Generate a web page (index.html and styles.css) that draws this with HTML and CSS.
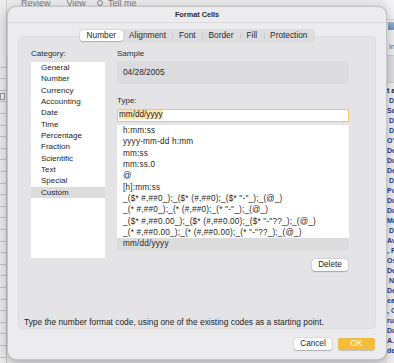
FILE: index.html
```html
<!DOCTYPE html>
<html>
<head>
<meta charset="utf-8">
<title>Format Cells</title>
<link rel="stylesheet" href="styles.css">
</head>
<body>
<div class="screen">
  <div class="strip-left">
    <div class="sl-top"></div>
    <div class="sl-grid">
      <div class="sl-drop"></div>
    </div>
  </div>
  <div class="backdrop">
    <div class="menubar">
      <span>Review</span>
      <span>View</span>
      <span class="tell"><span class="search"></span>Tell me</span>
    </div>
  </div>
  <div class="strip-right">
    <div class="sr-top"></div>
    <div class="sr-icon"></div>
    <div class="sr-in">In</div>
    <div class="sr-band"></div>
    <div class="sr-rows">
      <div class="hdr">t a</div>
      <div>&nbsp;D</div>
      <div>Sa</div>
      <div>&nbsp;D</div>
      <div>&nbsp;D</div>
      <div>O'C</div>
      <div>De</div>
      <div>Du</div>
      <div>De</div>
      <div>&nbsp;D</div>
      <div>Po</div>
      <div>Du</div>
      <div>Du</div>
      <div>Ma</div>
      <div>&nbsp;D</div>
      <div>Av</div>
      <div>, F</div>
      <div>Os</div>
      <div>De</div>
      <div>&nbsp;N</div>
      <div>De</div>
      <div>ea</div>
      <div>, C</div>
      <div>ru</div>
      <div>Du</div>
      <div>A.</div>
      <div>de</div>
    </div>
  </div>

  <div class="dialog">
    <div class="titlebar">Format Cells</div>
    <div class="dialog-body">
      <div class="tabs">
        <div class="tab active">Number</div>
        <div class="tab">Alignment</div>
        <div class="tab">Font</div>
        <div class="tab">Border</div>
        <div class="tab">Fill</div>
        <div class="tab">Protection</div>
      </div>
      <div class="panel">
        <div class="columns">
          <div class="cat-col">
            <div class="label">Category:</div>
            <div class="list cat-list">
              <div class="row">General</div>
              <div class="row">Number</div>
              <div class="row">Currency</div>
              <div class="row">Accounting</div>
              <div class="row">Date</div>
              <div class="row">Time</div>
              <div class="row">Percentage</div>
              <div class="row">Fraction</div>
              <div class="row">Scientific</div>
              <div class="row">Text</div>
              <div class="row">Special</div>
              <div class="row sel">Custom</div>
            </div>
          </div>
          <div class="main-col">
            <div class="label">Sample</div>
            <div class="sample">04/28/2005</div>
            <div class="label type-label">Type:</div>
            <div class="input"><span class="seltext">mm/dd/yyyy</span></div>
            <div class="list type-list">
              <div class="row">h:mm:ss</div>
              <div class="row">yyyy-mm-dd h:mm</div>
              <div class="row">mm:ss</div>
              <div class="row">mm:ss.0</div>
              <div class="row">@</div>
              <div class="row">[h]:mm:ss</div>
              <div class="row">_($* #,##0_);_($* (#,##0);_($* "-"_);_(@_)</div>
              <div class="row">_(* #,##0_);_(* (#,##0);_(* "-"_);_(@_)</div>
              <div class="row">_($* #,##0.00_);_($* (#,##0.00);_($* "-"??_);_(@_)</div>
              <div class="row">_(* #,##0.00_);_(* (#,##0.00);_(* "-"??_);_(@_)</div>
              <div class="row sel">mm/dd/yyyy</div>
            </div>
            <div class="delete-row"><button class="btn delete">Delete</button></div>
          </div>
        </div>
        <div class="hint">Type the number format code, using one of the existing codes as a starting point.</div>
      </div>
      <div class="actions">
        <button class="btn cancel">Cancel</button>
        <button class="btn ok">OK</button>
      </div>
    </div>
  </div>
</div>
</body>
</html>
```

FILE: styles.css
```css
* { box-sizing: border-box; margin: 0; padding: 0; }
html, body { width: 394px; height: 363px; overflow: hidden; }
body {
  font-family: "Liberation Sans", Arial, sans-serif;
  color: #262626;
  background: #e8e8e8;
}
.screen { position: relative; display: flex; width: 394px; height: 363px; }

/* background app */
.strip-left { width: 7px; flex: none; display: flex; flex-direction: column; background: #e6e6e6; }
.sl-top { height: 56px; background: #ececec; border-right: 1px solid #d2d2d2; }
.sl-grid {
  flex: 1;
  position: relative;
  background: repeating-linear-gradient(to bottom, #eeeeee 0 10.6px, #c6c6c6 10.6px 11.6px);
  border-right: 1px solid #c9c9c9;
}
.sl-drop { position: absolute; left: 0; top: 37px; width: 5px; height: 7px; border: 1px solid #9a9a9a; background: #f4f4f4; }

.backdrop { flex: 1; background: #ececec; }
.menubar { display: flex; gap: 16px; padding-left: 14px; margin-top: -2px; font-size: 9px; line-height: 10px; color: #7c7c7c; }
.tell { display: flex; align-items: center; gap: 5px; margin-left: -5px; }
.search { width: 6px; height: 6px; border: 1px solid #8a8a8a; border-radius: 50%; }

.strip-right { width: 7px; flex: none; display: flex; flex-direction: column; background: #f3f3f5; overflow: hidden; }
.sr-top { height: 20px; border-bottom: 1px solid #d6d6d6; }
.sr-icon { height: 8px; margin: 2px 0 0 1px; width: 6px; background: linear-gradient(#9fb8d8, #6f92c0); border-radius: 1px; }
.sr-in { margin-top: 13px; padding-left: 2px; font-size: 7px; line-height: 8px; color: #555; }
.sr-band { height: 28px; margin-top: 4px; background: #e2e2e4; border-top: 1px solid #cfcfcf; border-bottom: 1px solid #cfcfcf; }
.sr-rows { padding-top: 3px; font-size: 7px; font-weight: bold; line-height: 10px; color: #2c3c8e; white-space: nowrap; }
.sr-rows .hdr { color: #222; }

/* dialog */
.dialog {
  position: absolute;
  left: 7px; top: 6px;
  width: 380px; height: 354px;
  background: #ececee;
  border: 1px solid #c6c6c8;
  border-radius: 9px;
  box-shadow: 0 4px 14px rgba(0,0,0,0.28), 0 0 1px rgba(0,0,0,0.3);
  display: flex;
  flex-direction: column;
  overflow: hidden;
}
.titlebar {
  height: 16px;
  border-bottom: 1px solid #dadadc;
  text-align: center;
  font-size: 7.3px;
  font-weight: bold;
  line-height: 15px;
  color: #2a2a2a;
}
.dialog-body { padding: 6px 10px 0; display: flex; flex-direction: column; }

.tabs {
  align-self: center;
  display: flex;
  height: 13px;
  padding: 1px;
  background: #dddddf;
  border-radius: 4px;
  position: relative;
  z-index: 1;
  margin-bottom: -6px;
}
.tab { position: relative; padding: 0 6.5px; font-size: 8.3px; line-height: 11px; color: #2a2a2a; }
.tab.active { background: #fff; border-radius: 3px; box-shadow: 0 0.5px 1px rgba(0,0,0,0.22); }
.tab:not(.active) + .tab::before {
  content: "";
  position: absolute;
  left: 0; top: 3px;
  width: 1px; height: 6px;
  background: #c9c9cb;
}

.panel {
  height: 293px;
  background: #e4e4e6;
  border: 1px solid #dcdcde;
  border-radius: 5px;
  padding: 12px 26px 1.5px 5px;
  display: flex;
  flex-direction: column;
}
.columns { display: flex; gap: 12px; margin-left: 7px; }
.cat-col { width: 74px; flex: none; }
.main-col { flex: 1; min-width: 0; }
.label { font-size: 8px; line-height: 9px; color: #2a2a2a; }

.list { background: #fff; }
.cat-list { margin-top: 4px; height: 196px; }
.row { height: 11.33px; font-size: 8px; line-height: 11.33px; white-space: nowrap; overflow: hidden; }
.cat-list .row { padding-left: 10px; }
.type-list .row { padding-left: 6px; font-size: 8.2px; letter-spacing: 0.2px; }
.row.sel { background: #dcdcdc; }

.sample {
  margin-top: 3px;
  height: 23px;
  padding-left: 6px;
  background: #dcdcde;
  border-radius: 4px;
  font-size: 8.3px;
  line-height: 23px;
}
.type-label { margin-top: 12px; }
.input {
  margin-top: 4px;
  height: 13px;
  padding-left: 1px;
  background: #fff;
  border: 1.5px solid #f0c66c;
  border-radius: 1px;
  font-size: 8.2px;
  line-height: 10px;
}
.seltext { background: #fbe6b0; }
.type-list { margin-top: 3px; }

.delete-row { display: flex; justify-content: flex-end; margin-top: 9.5px; padding-right: 1px; }

.btn {
  font-family: inherit;
  font-size: 8.2px;
  color: #262626;
  border: none;
  background: #fff;
  border-radius: 3px;
  height: 12px;
  line-height: 12px;
  box-shadow: 0 0 0 0.5px rgba(0,0,0,0.12), 0 0.5px 1px rgba(0,0,0,0.22);
}
.delete { width: 36px; height: 11.5px; line-height: 11.5px; }

.hint { margin-top: auto; font-size: 8.4px; line-height: 10px; color: #262626; }

.actions { display: flex; justify-content: flex-end; gap: 6px; margin-top: 9px; padding-right: 1px; }
.cancel { width: 38px; }
.ok { width: 37px; background: #f3bc3c; color: #fff; box-shadow: 0 0.5px 1px rgba(0,0,0,0.18); }
```
